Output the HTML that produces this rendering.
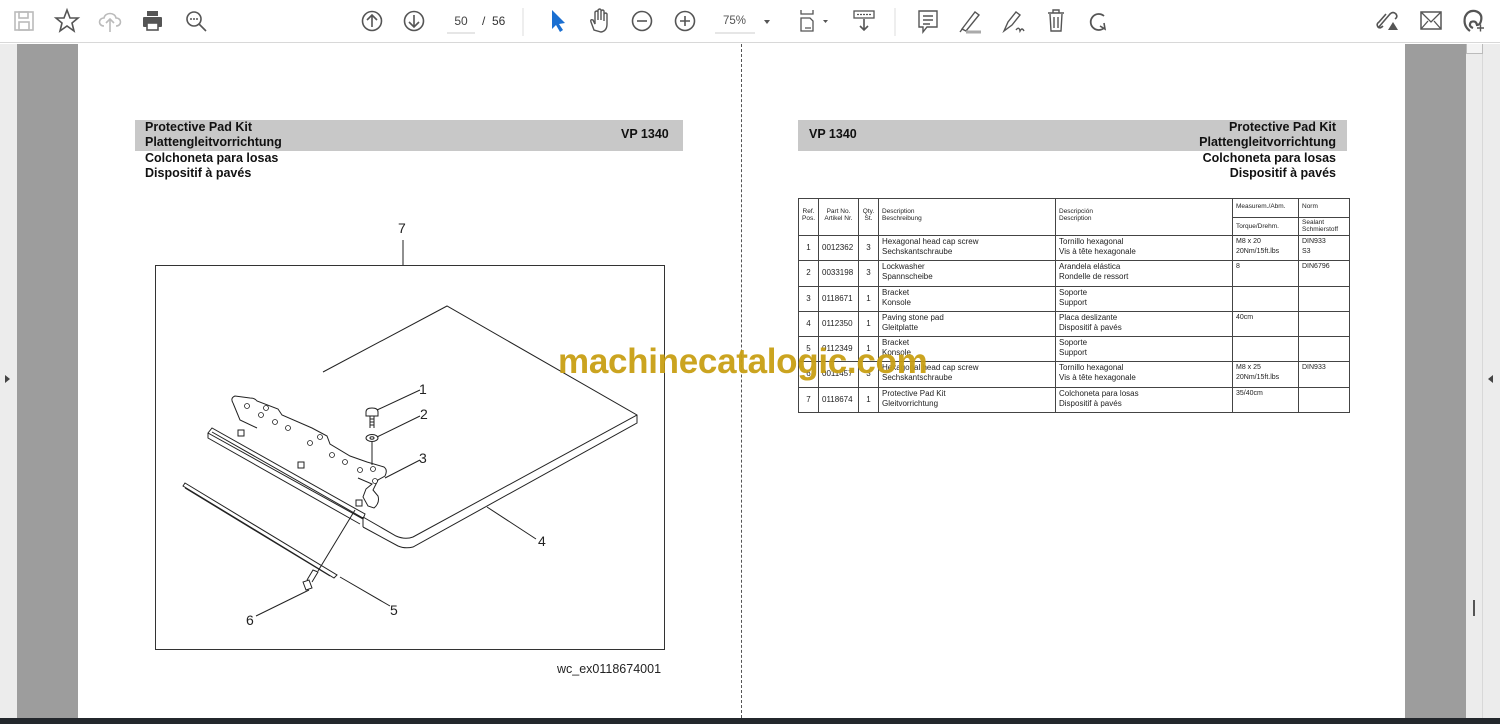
<!DOCTYPE html>
<html><head><meta charset="utf-8"><style>
*{margin:0;padding:0;box-sizing:border-box}
body{width:1500px;height:724px;overflow:hidden;background:#fff;font-family:"Liberation Sans",Arial,sans-serif;position:relative}
.abs{position:absolute}
.tb{left:0;top:0;width:1500px;height:43px;background:#fff;border-bottom:1px solid #d8d8d8}
.hb{background:#c8c8c8;height:31px;font-weight:bold;font-size:12.5px;color:#111;line-height:15px}
.t{font-size:12.5px;font-weight:bold;color:#111;line-height:15.4px}
table{border-collapse:collapse;font-size:8px;color:#222;table-layout:fixed}
td{border:1px solid #444;vertical-align:top;padding:1px 3px;line-height:10px;overflow:hidden;white-space:nowrap}
tr.r td{height:25.3px}
.h td{font-size:6.5px;line-height:7px;padding:2px 3px}
</style></head><body>
<div class="abs tb"></div>
<svg class="abs" style="left:0;top:0" width="1500" height="43" fill="none" stroke="#555" stroke-width="1.6">
<g stroke="#bbb"><rect x="15" y="12" width="18" height="18"/><rect x="19" y="12" width="9" height="6"/><rect x="19" y="22" width="10" height="8"/></g>
<path d="M67 10 L70 18 L78 18 L72 23 L74 31 L67 26 L60 31 L62 23 L56 18 L64 18Z"/>
<g stroke="#bbb"><path d="M104 26 C98 26 98 18 104 18 C105 12 115 12 116 18 C122 18 122 26 116 26"/><path d="M110 32 V19 M106 23 L110 19 L114 23"/></g>
<g fill="#555" stroke="none"><rect x="143" y="17" width="19" height="10" rx="1"/><rect x="147" y="11" width="11" height="5"/></g><rect x="147" y="23" width="11" height="7" fill="#fff"/>
<circle cx="194" cy="19" r="7"/><path d="M199 24 L206 31"/><g fill="#555" stroke="none"><circle cx="191" cy="19" r="1"/><circle cx="194" cy="19" r="1"/><circle cx="197" cy="19" r="1"/></g>
<circle cx="372" cy="21" r="9.5"/><path d="M372 27 V15 M367 20 L372 15 L377 20"/>
<circle cx="414" cy="21" r="9.5"/><path d="M414 15 V27 M409 22 L414 27 L419 22"/>
<path d="M447 33 H475" stroke="#ccc" stroke-width="1"/>
<path d="M523 8 V36" stroke="#ddd" stroke-width="1"/>
<path d="M552 10 L552 29 L556 25 L560 32 L563 30 L559 24 L565 23Z" fill="#1a6fd1" stroke="none"/>
<path d="M594 30 L591 22 Q590 19 593 20 L595 24 V12 Q597 10 598 12 V20 V10 Q600 8 601 10 V20 V11 Q603 9 604 11 V21 V14 Q606 12 607 14 V24 Q607 31 601 32Z" stroke-width="1.4"/>
<circle cx="642" cy="21" r="9.5"/><path d="M637 21 H647"/>
<circle cx="685" cy="21" r="9.5"/><path d="M680 21 H690 M685 16 V26"/>
<path d="M715 33 H755" stroke="#ccc" stroke-width="1"/>
<path d="M764 20 L770 20 L767 24Z" fill="#555" stroke="none"/>
<path d="M801 10 V14 H813 V10 M803 18 H810 L813 21 V31 H801 V18Z M805 28 H811" stroke-width="1.3"/>
<path d="M823 20 L828 20 L825.5 23Z" fill="#555" stroke="none"/>
<rect x="854" y="11" width="20" height="7" stroke-width="1.3"/><path d="M857 14.5 H871" stroke-dasharray="2 1" stroke-width="1.3"/><path d="M864 19 V30 M860 26 L864 30 L868 26"/>
<path d="M895 8 V36" stroke="#ddd" stroke-width="1"/>
<path d="M919 11 H937 V27 H927 L923 32 V27 H919Z M923 16 H933 M923 20 H933 M923 24 H930" stroke-width="1.4"/>
<path d="M962 29 L975 12 L979 15 L966 31Z M960 32 L963 28" stroke-width="1.4"/><path d="M966 32 H981" stroke="#aaa" stroke-width="3"/>
<path d="M1004 31 L1008 22 L1016 12 L1020 15 L1012 25Z M1016 30 Q1019 26 1020 31 Q1022 27 1024 31" stroke-width="1.4"/>
<path d="M1048 13 H1064 M1053 13 V10 H1059 V13 M1050 14 L1051 31 H1061 L1062 14 M1054 17 V28 M1058 17 V28" stroke-width="1.4"/>
<path d="M1104 16 A8 8 0 1 0 1104 28" stroke-width="1.8"/><path d="M1100 26 L1105 29 L1104 23"/>
<path d="M1378 28 L1390 14 Q1393 11 1396 14 Q1398 17 1395 19 M1383 26 Q1380 29 1378 27 Q1376 24 1379 22 L1386 14" stroke-width="1.6"/><path d="M1388 30 L1393 22 L1398 30Z" fill="#555" stroke="none"/>
<rect x="1421" y="12" width="20" height="17" stroke-width="1.5"/><path d="M1421 12 L1431 22 L1441 12 M1421 29 L1428 21 M1441 29 L1434 21" stroke-width="1.3"/>
<path d="M1470 31 Q1463 26 1465 17 Q1468 10 1475 11 Q1483 13 1481 21 Q1480 25 1477 25 Q1476 20 1471 22 Q1468 26 1473 28" stroke-width="2.2"/><path d="M1477 28 H1484 M1480.5 24.5 V31.5" stroke-width="1.4"/>
</svg>
<div class="abs" style="left:450px;top:14px;width:22px;font-size:12px;color:#444;text-align:center">50</div>
<div class="abs" style="left:482px;top:14px;font-size:12px;color:#333">/ &nbsp;56</div>
<div class="abs" style="left:723px;top:15px;font-size:11.5px;color:#555">75%</div>

<div class="abs" style="left:0;top:44px;width:17px;height:674px;background:#ececec"></div>
<div class="abs" style="left:17px;top:44px;width:61px;height:674px;background:#9d9d9d"></div>
<div class="abs" style="left:1405px;top:44px;width:61px;height:674px;background:#9d9d9d"></div>
<div class="abs" style="left:1466px;top:44px;width:34px;height:674px;background:#ececec"></div>
<div class="abs" style="left:1482px;top:44px;width:1px;height:674px;background:#d8d8d8"></div>
<div class="abs" style="left:1466px;top:44px;width:17px;height:10px;border:1px solid #bbb;border-top:none;background:#f4f4f4"></div>
<div class="abs" style="left:5px;top:375px;width:0;height:0;border-left:5px solid #444;border-top:4px solid transparent;border-bottom:4px solid transparent"></div>
<div class="abs" style="left:1488px;top:375px;width:0;height:0;border-right:5px solid #444;border-top:4px solid transparent;border-bottom:4px solid transparent"></div>
<div class="abs" style="left:1473px;top:600px;width:2px;height:16px;background:#555"></div>
<div class="abs" style="left:0;top:718px;width:1500px;height:6px;background:#23272c"></div>
<div class="abs" style="left:741px;top:44px;height:674px;border-left:1px dashed #555"></div>

<div class="abs hb" style="left:135px;top:120px;width:548px"></div>
<div class="abs t" style="left:145px;top:120px">Protective Pad Kit<br>Plattengleitvorrichtung<br>Colchoneta para losas<br>Dispositif à pavés</div>
<div class="abs t" style="left:621px;top:127px">VP 1340</div>
<div class="abs hb" style="left:798px;top:120px;width:549px"></div>
<div class="abs t" style="left:809px;top:127px">VP 1340</div>
<div class="abs t" style="right:164px;top:120px;text-align:right">Protective Pad Kit<br>Plattengleitvorrichtung<br>Colchoneta para losas<br>Dispositif à pavés</div>

<svg class="abs" style="left:0;top:0" width="741" height="718" fill="none" stroke="#222" stroke-width="1">
<rect x="155.5" y="265.5" width="509" height="384" stroke="#333"/>
<path d="M403 240 V265"/>
<path d="M323 372 L447 306 L637 415 L637 423 L413 547 Q405 549 398 546 L363 527"/>
<path d="M637 415 L413 537 Q405 540 396 536 L363 517"/>
<path d="M363 517 V527"/>
<path d="M233 403 Q230 398 235 396 L250 398 Q255 398 257 401 L278 409 L282 415 L312 428 L327 436 L330 444 L350 456 L367 462 L384 467 Q388 470 385 476 L378 480 L373 490 L378 496 Q380 503 374 508 L368 506 L363 497 L366 489 L372 484 L358 478"/>
<path d="M233 403 L240 420 L257 428"/>
<path d="M208 433 L212 428 L365 514 L363 519 Z M212 432 L363 518 M208 433 L208 438 L360 524"/>
<path d="M183 486 L185 483 L337 575 L334 578Z M185 488 L330 576"/>
<g fill="#fff"><rect x="238" y="430" width="6" height="6"/><rect x="298" y="462" width="6" height="6"/><rect x="356" y="500" width="6" height="6"/></g>
<g fill="#fff" stroke-width="0.8"><circle cx="247" cy="406" r="2.5"/><circle cx="266" cy="408" r="2.5"/><circle cx="261" cy="415" r="2.5"/><circle cx="275" cy="422" r="2.5"/><circle cx="288" cy="428" r="2.5"/><circle cx="310" cy="443" r="2.5"/><circle cx="320" cy="437" r="2.5"/><circle cx="332" cy="455" r="2.5"/><circle cx="345" cy="462" r="2.5"/><circle cx="360" cy="470" r="2.5"/><circle cx="373" cy="469" r="2.5"/><circle cx="375" cy="481" r="2.5"/></g>
<path d="M366 412 Q366 408 372 408 Q378 408 378 412 V416 H366Z"/><path d="M370 416 V428 M374 416 V428 M370 419 H374 M370 422 H374 M370 425 H374"/>
<ellipse cx="372" cy="438" rx="6" ry="3.5"/><ellipse cx="372" cy="438" rx="2" ry="1.2"/>
<path d="M372 442 V465"/>
<path d="M303 582 L306 590 L312 588 L309 580Z M307 580 L313 570 L318 572 L312 582"/>
<path d="M318 571 L355 510"/>
<path d="M377 410 L420 390 M377 437 L420 416 M385 478 L420 460 M487 507 L536 539 M340 577 L390 606 M309 590 L256 616"/>
<g fill="#222" stroke="none" font-family="Liberation Sans,Arial,sans-serif" font-size="14"><text x="398" y="233">7</text><text x="419" y="394">1</text><text x="420" y="419">2</text><text x="419" y="463">3</text><text x="538" y="546">4</text><text x="390" y="615">5</text><text x="246" y="625">6</text></g>
</svg>
<div class="abs" style="left:557px;top:662px;font-size:12.5px;color:#222">wc_ex0118674001</div>

<table class="abs" style="left:798px;top:198px;width:551px">
<colgroup><col style="width:20px"><col style="width:40px"><col style="width:20px"><col style="width:177px"><col style="width:177px"><col style="width:66px"><col style="width:51px"></colgroup>
<tr class="h"><td rowspan="2" style="text-align:center;padding-top:9px">Ref.<br>Pos.</td><td rowspan="2" style="text-align:center;padding-top:9px">Part No.<br>Artikel Nr.</td><td rowspan="2" style="text-align:center;padding-top:9px">Qty.<br>St.</td><td rowspan="2" style="padding-top:9px">Description<br>Beschreibung</td><td rowspan="2" style="padding-top:9px">Descripción<br>Description</td><td style="height:19px;padding-top:4px">Measurem./Abm.</td><td style="padding-top:4px">Norm</td></tr>
<tr class="h"><td style="height:18px;padding-top:5px">Torque/Drehm.</td><td style="padding-top:1px">Sealant<br>Schmierstoff</td></tr>
<tr class="r"><td style="text-align:center;padding-top:7px">1</td><td style="padding-top:7px">0012362</td><td style="text-align:center;padding-top:7px">3</td><td>Hexagonal head cap screw<br>Sechskantschraube</td><td>Tornillo hexagonal<br>Vis à tête hexagonale</td><td style="font-size:7px">M8 x 20<br>20Nm/15ft.lbs</td><td style="font-size:7px">DIN933<br>S3</td></tr>
<tr class="r"><td style="text-align:center;padding-top:7px">2</td><td style="padding-top:7px">0033198</td><td style="text-align:center;padding-top:7px">3</td><td>Lockwasher<br>Spannscheibe</td><td>Arandela elástica<br>Rondelle de ressort</td><td style="font-size:7px">8</td><td style="font-size:7px">DIN6796</td></tr>
<tr class="r"><td style="text-align:center;padding-top:7px">3</td><td style="padding-top:7px">0118671</td><td style="text-align:center;padding-top:7px">1</td><td>Bracket<br>Konsole</td><td>Soporte<br>Support</td><td></td><td></td></tr>
<tr class="r"><td style="text-align:center;padding-top:7px">4</td><td style="padding-top:7px">0112350</td><td style="text-align:center;padding-top:7px">1</td><td>Paving stone pad<br>Gleitplatte</td><td>Placa deslizante<br>Dispositif à pavés</td><td style="font-size:7px">40cm</td><td></td></tr>
<tr class="r"><td style="text-align:center;padding-top:7px">5</td><td style="padding-top:7px">0112349</td><td style="text-align:center;padding-top:7px">1</td><td>Bracket<br>Konsole</td><td>Soporte<br>Support</td><td></td><td></td></tr>
<tr class="r"><td style="text-align:center;padding-top:7px">6</td><td style="padding-top:7px">0011457</td><td style="text-align:center;padding-top:7px">3</td><td>Hexagonal head cap screw<br>Sechskantschraube</td><td>Tornillo hexagonal<br>Vis à tête hexagonale</td><td style="font-size:7px">M8 x 25<br>20Nm/15ft.lbs</td><td style="font-size:7px">DIN933</td></tr>
<tr class="r"><td style="text-align:center;padding-top:7px">7</td><td style="padding-top:7px">0118674</td><td style="text-align:center;padding-top:7px">1</td><td>Protective Pad Kit<br>Gleitvorrichtung</td><td>Colchoneta para losas<br>Dispositif à pavés</td><td style="font-size:7px">35/40cm</td><td></td></tr>
</table>

<div class="abs" style="left:558px;top:342px;font-size:35px;font-weight:bold;color:#c9a015;letter-spacing:-0.3px;opacity:0.95">machinecatalogic.com</div>
</body></html>
